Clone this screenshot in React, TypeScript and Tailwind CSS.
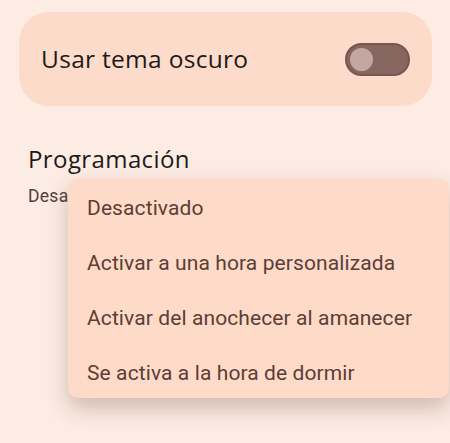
import React from "react";

const menuItems = [
  "Desactivado",
  "Activar a una hora personalizada",
  "Activar del anochecer al amanecer",
  "Se activa a la hora de dormir",
];

export default function App() {
  return (
    <div
      className="relative w-[450px] h-[443px] overflow-hidden bg-[#fdece4]"
      style={{ fontFamily: "Roboto, 'Noto Sans', sans-serif" }}
    >
      <div className="pt-[12px] px-[19px]">
        {/* Dark theme toggle card */}
        <div className="h-[94px] w-[413px] rounded-[30px] bg-[#fddbca] flex items-center justify-between pl-[22px] pr-[22px]">
          <span
            className="text-[24.5px] tracking-[0.3px] text-[#1e1a18]"
            style={{ fontFamily: "'Open Sans', Roboto, sans-serif" }}
          >
            Usar tema oscuro
          </span>
          <div className="w-[65px] h-[33px] rounded-full bg-[#86665e] border-[2px] border-[#76574f] flex items-center pl-[3px]">
            <div className="w-[23px] h-[23px] rounded-full bg-[#c4a7a0]" />
          </div>
        </div>

        {/* Schedule setting */}
        <div className="pl-[9px] pt-[39px]">
          <div
            className="text-[24px] leading-[28px] tracking-[0.4px] text-[#1e1a18]"
            style={{ fontFamily: "'Open Sans', Roboto, sans-serif" }}
          >
            Programación
          </div>
          <div className="text-[17.5px] leading-[20px] mt-[13px] tracking-[0.3px] text-[#52403b]">
            Desactivado
          </div>
        </div>
      </div>

      {/* Dropdown menu */}
      <div className="absolute left-[68px] top-[179px] w-[381px] h-[219px] rounded-[10px] bg-[#fedac8] shadow-[0_10px_22px_rgba(90,50,40,0.28)] flex flex-col pt-[2px]">
        {menuItems.map((item) => (
          <div
            key={item}
            className="h-[55px] flex-none flex items-center pl-[19px] text-[21px] tracking-[0.1px] text-[#5b3e36]"
          >
            {item}
          </div>
        ))}
      </div>
    </div>
  );
}
